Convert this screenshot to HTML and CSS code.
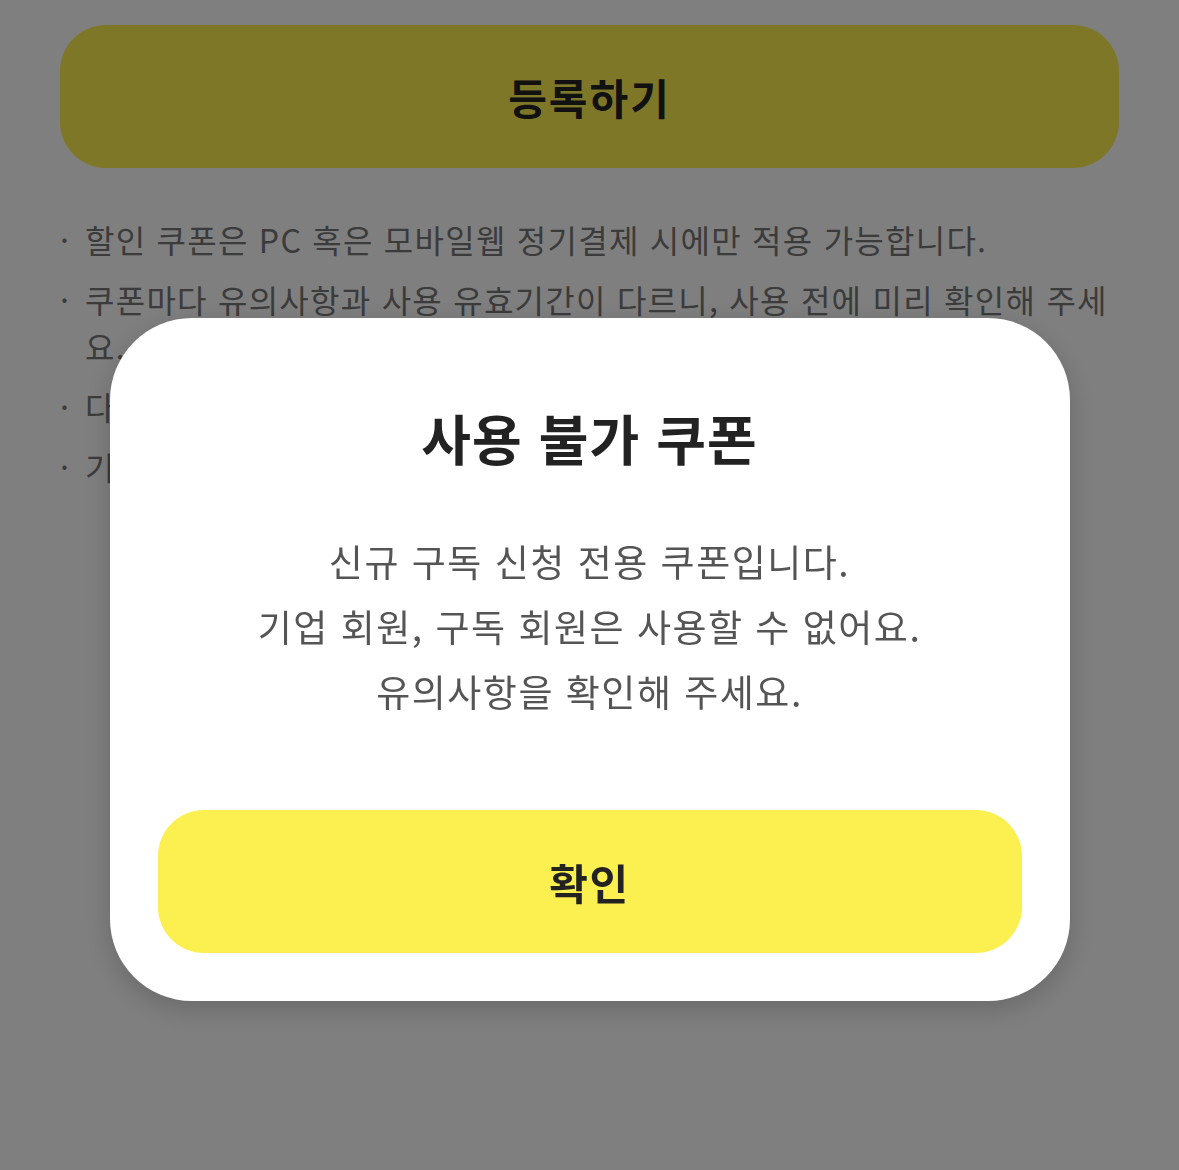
FILE: index.html
```html
<!DOCTYPE html>
<html lang="ko">
<head>
  <meta charset="UTF-8" />
  <title>쿠폰 등록</title>
  <meta name="viewport" content="width=device-width, initial-scale=1" />
  <link rel="stylesheet" href="styles.css">
</head>
<body>
  <main class="coupon-page">
    <button type="button" class="register-btn">등록하기</button>
    <ul class="notice-list">
      <li>할인 쿠폰은 PC 혹은 모바일웹 정기결제 시에만 적용 가능합니다.</li>
      <li>쿠폰마다 유의사항과 사용 유효기간이 다르니, 사용 전에 미리 확인해 주세요.</li>
      <li>다른 할인 쿠폰과 중복으로 사용할 수 없습니다.</li>
      <li>기간이 지난 쿠폰은 자동으로 소멸됩니다.</li>
    </ul>
  </main>

  <div class="overlay">
    <div class="modal">
      <h2>사용 불가 쿠폰</h2>
      <p>신규 구독 신청 전용 쿠폰입니다.<br>기업 회원, 구독 회원은 사용할 수 없어요.<br>유의사항을 확인해 주세요.</p>
      <button type="button" class="confirm-btn">확인</button>
    </div>
  </div>
</body>
</html>
```

FILE: styles.css
```css
body {
  margin: 0;
  font-family: "Noto Sans CJK KR", "Noto Sans", sans-serif;
  background: #fff;
  min-height: 100vh;
}
.coupon-page {
  padding: 25px 60px 0 60px;
}
.register-btn {
  display: block;
  width: 100%;
  height: 143px;
  border: none;
  border-radius: 46px;
  background: #fcee50;
  color: #222;
  font-family: inherit;
  font-size: 42px;
  font-weight: 700;
  letter-spacing: 2px;
  cursor: pointer;
}
.notice-list {
  list-style: none;
  margin: 48px 0 0 0;
  padding: 0;
}
.notice-list li {
  position: relative;
  padding-left: 25px;
  margin-bottom: 13px;
  font-size: 32px;
  line-height: 47px;
  color: #777;
  letter-spacing: 1.25px;
}
.notice-list li::before {
  content: "·";
  position: absolute;
  left: 0;
  top: 0;
}
.overlay {
  position: fixed;
  inset: 0;
  background: rgba(0, 0, 0, 0.5);
  display: flex;
  justify-content: center;
  align-items: flex-start;
  padding-top: 318px;
}
.modal {
  width: 960px;
  box-sizing: border-box;
  background: #fff;
  border-radius: 82px;
  padding: 88px 48px 48px 48px;
  box-shadow: 0 8px 28px rgba(0, 0, 0, 0.18);
  text-align: center;
}
.modal h2 {
  margin: 0;
  font-size: 54px;
  line-height: 64px;
  font-weight: 700;
  color: #222;
  letter-spacing: 1px;
}
.modal p {
  margin: 59px 0 0 0;
  font-size: 37px;
  line-height: 65px;
  color: #555;
  letter-spacing: 1.5px;
}
.confirm-btn {
  display: block;
  width: 100%;
  height: 143px;
  margin-top: 86px;
  border: none;
  border-radius: 46px;
  background: #fcf050;
  color: #222;
  font-family: inherit;
  font-size: 42px;
  font-weight: 700;
  letter-spacing: 1.5px;
  cursor: pointer;
}
```
